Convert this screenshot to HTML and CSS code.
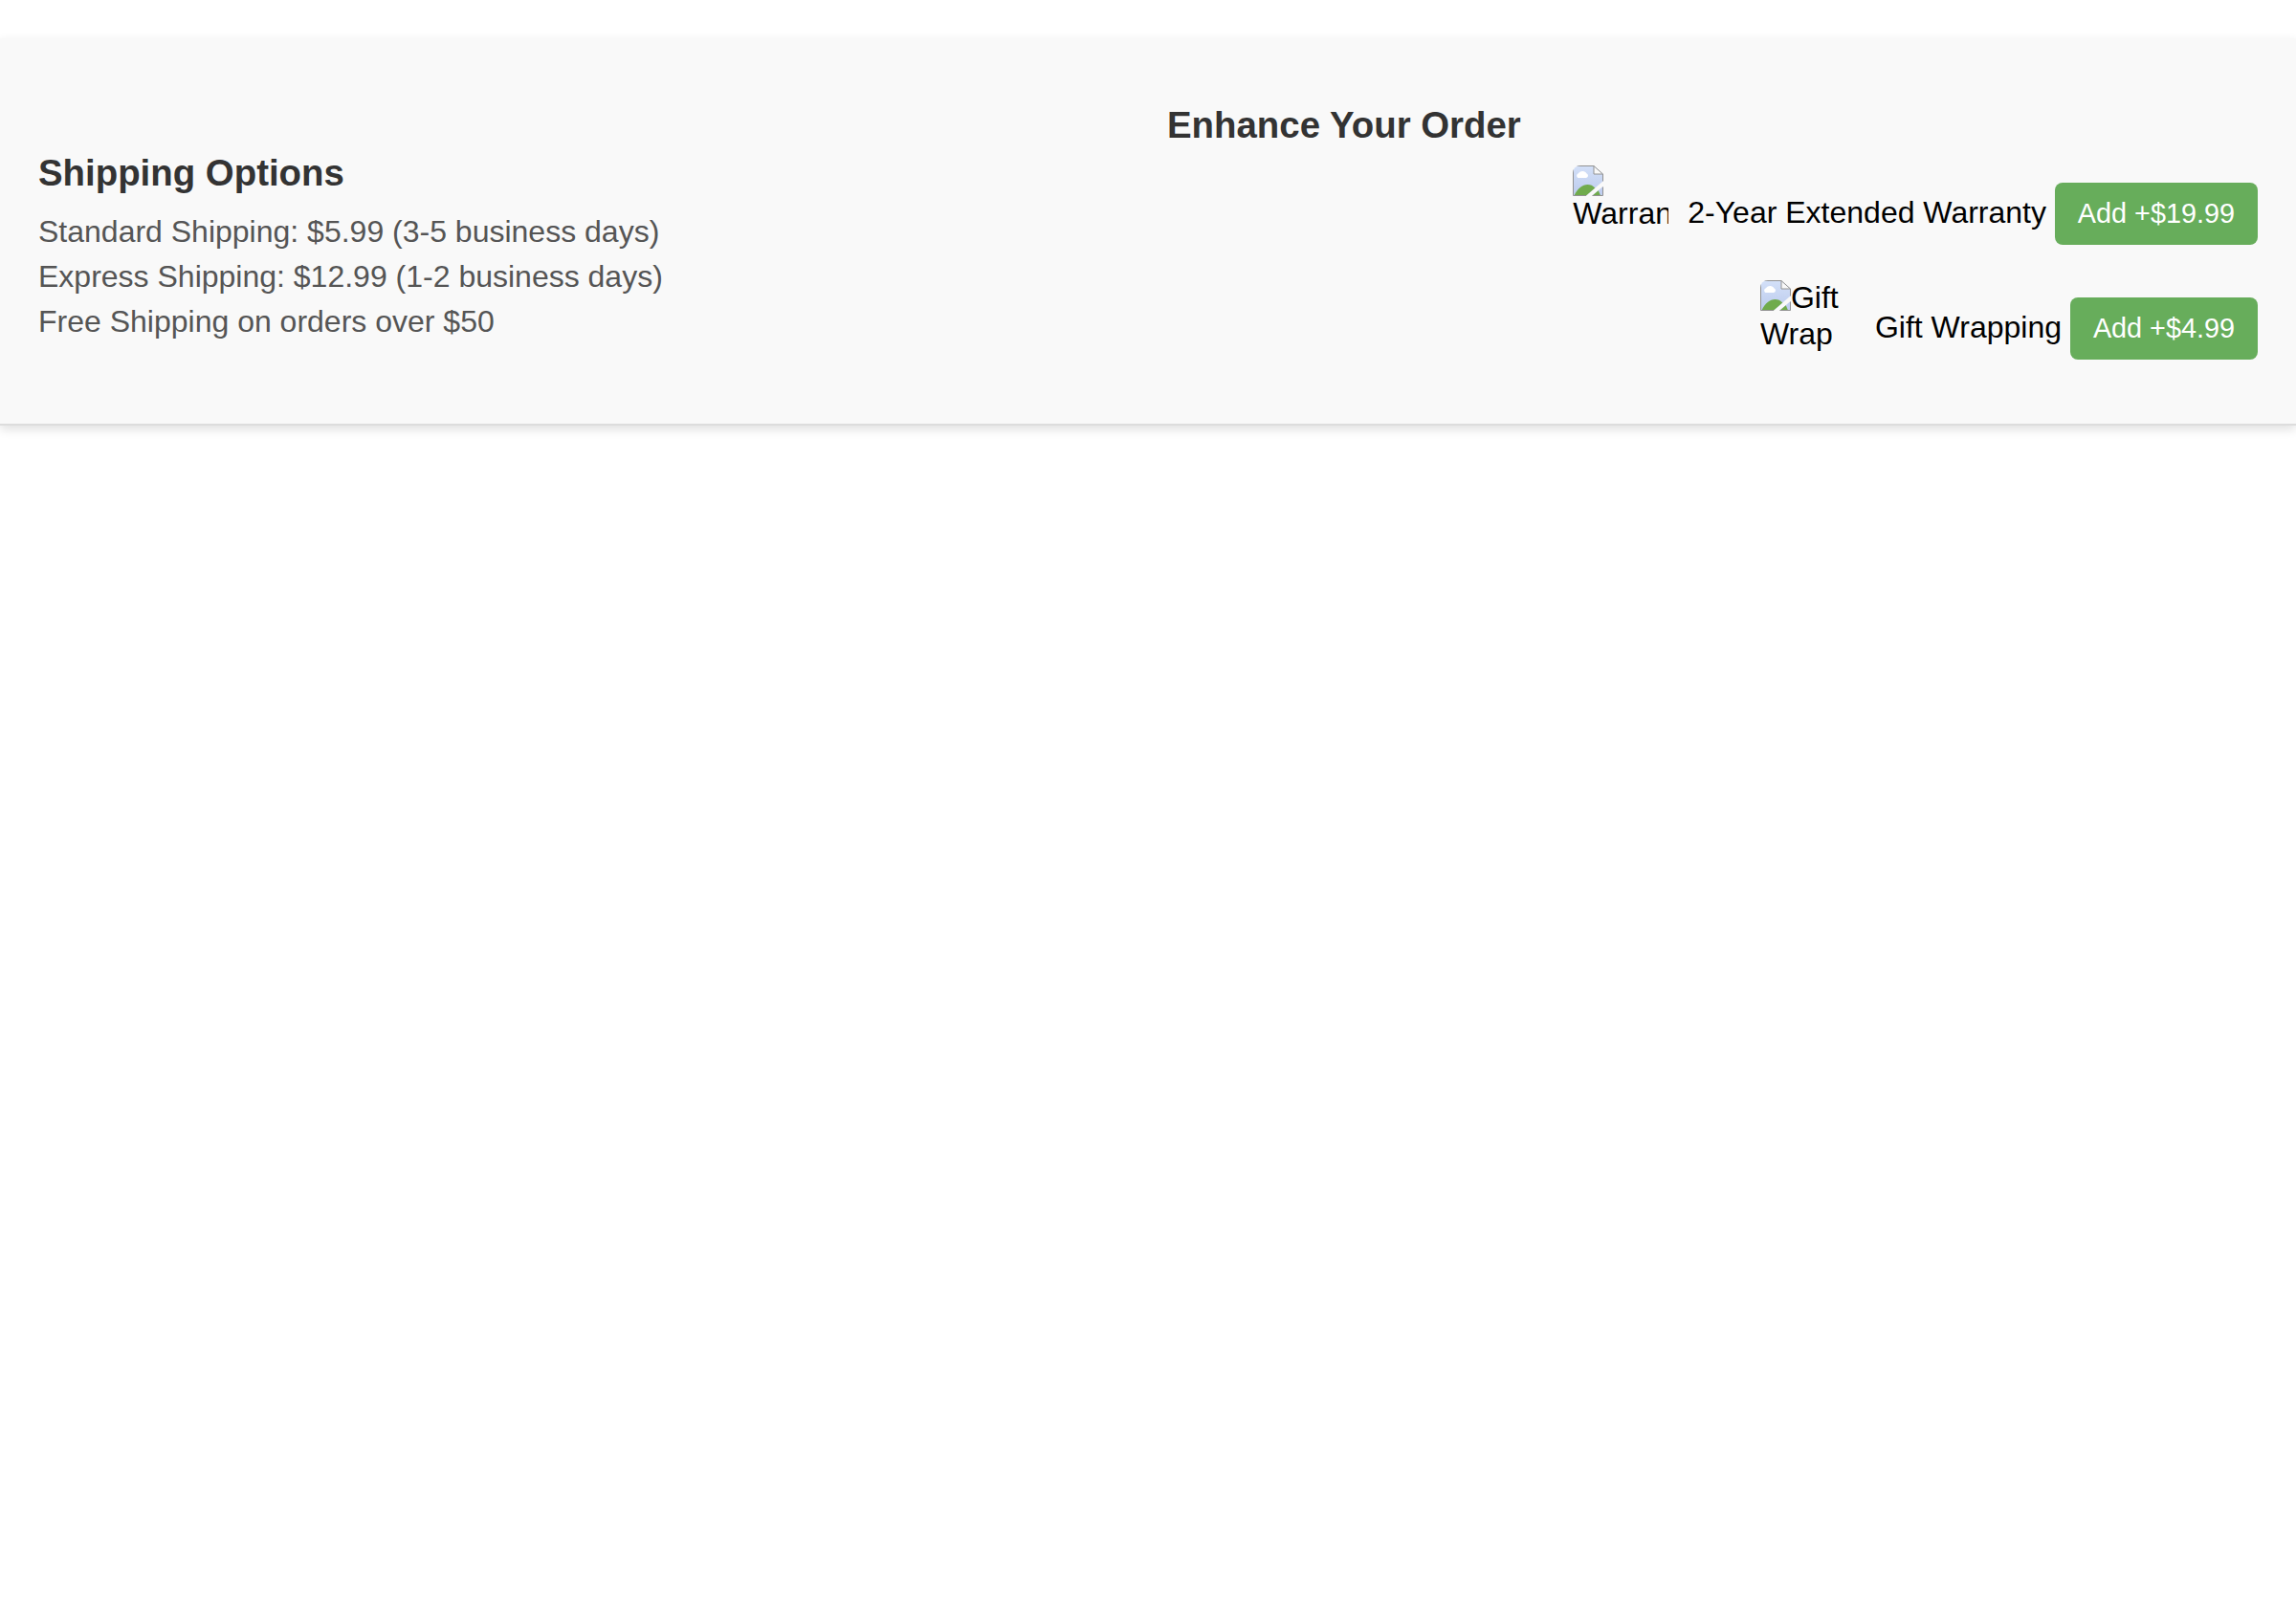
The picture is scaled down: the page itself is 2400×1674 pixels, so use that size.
FILE: index.html
```html
<!DOCTYPE html>
<html lang="en">
<head>
<meta charset="utf-8">
<title>Shipping Options</title>
<link rel="stylesheet" href="styles.css">
</head>
<body>
<svg class="defs" width="0" height="0" aria-hidden="true">
  <symbol id="broken" viewBox="0 0 32 32">
    <linearGradient id="sky" x1="0" y1="0" x2="0" y2="1"><stop offset="0" stop-color="#d3e0f8"/><stop offset="1" stop-color="#bccbed"/></linearGradient>
    <path d="M0.5 0.5H22L31.5 9V16.5L14 31.5H0.5Z" fill="url(#sky)"/>
    <path d="M31.5 22V31.5H20.5Z" fill="#c0cef0"/>
    <path d="M1.500 31.500C5 24 10 20 15.500 20C18.500 20 21 21 23.300 23.500L14 31.500Z" fill="#70ab4c"/>
    <path d="M20.500 31.500L26.800 26.200L29 31.500Z" fill="#70ab4c"/>
    <path d="M5.500 13A2.600 2.600 0 0 1 6 8.200A5 5 0 0 1 14.600 8.600A2.300 2.300 0 0 1 14 13Z" fill="#fff"/>
    <path d="M22 1V9H31Z" fill="#f9f9f9"/>
    <path d="M14 31.500H0.500V0.500H22L31.500 9V16.500M22 0.500V9H31.500M31.500 22.500V31.500H20.500" fill="none" stroke="#929292"/>
  </symbol>
</svg>
<section class="banner">
  <div class="column">
    <h3 class="title">Shipping Options</h3>
    <div class="rates">
      <p class="rate">Standard Shipping: $5.99 (3-5 business days)</p>
      <p class="rate">Express Shipping: $12.99 (1-2 business days)</p>
      <p class="rate">Free Shipping on orders over $50</p>
    </div>
  </div>
  <div class="column">
    <h3 class="title">Enhance Your Order</h3>
    <div class="addon">
      <div class="thumb"><svg class="thumb-icon"><use href="#broken"/></svg>Warranty</div>
      <div class="offer">2-Year Extended Warranty <button class="add">Add +$19.99</button></div>
    </div>
    <div class="addon">
      <div class="thumb"><svg class="thumb-icon"><use href="#broken"/></svg>Gift Wrap</div>
      <div class="offer">Gift Wrapping <button class="add">Add +$4.99</button></div>
    </div>
  </div>
</section>
</body>
</html>
```

FILE: styles.css
```css
body {
  box-sizing: border-box;
  min-height: 100vh;
  margin: 0;
  padding-top: 40px;
  background: #fff;
  font: 32px/37px "Liberation Sans", Arial, sans-serif;
  color: #000;
}
.defs {
  display: block;
}
.banner {
  display: flex;
  align-items: center;
  gap: 40px;
  box-sizing: border-box;
  height: 405px;
  padding: 69px 40px 30px;
  background: #f9f9f9;
  border-bottom: 2px solid #ddd;
  box-shadow: 0 4px 10px rgba(0, 0, 0, 0.12);
}
.column {
  flex: 1;
}
.title {
  margin: 0 0 20px;
  font-size: 38.4px;
  line-height: 44px;
  color: #333;
}
.rates {
  padding-top: 1px;
  margin-bottom: -1px;
}
.rate {
  margin: 0 0 10px;
  color: #555;
}
.addon {
  display: flex;
  align-items: center;
  justify-content: flex-end;
  gap: 20px;
  margin-bottom: 20px;
}
.thumb {
  width: 100px;
  height: 100px;
  overflow: hidden;
  border-radius: 8px;
  line-height: 37.5px;
}
.thumb-icon {
  float: left;
  width: 32px;
  height: 32px;
}
.offer {
  white-space: nowrap;
}
.add {
  padding: 16px 24px;
  border: 0;
  border-radius: 8px;
  background: #67ad5b;
  color: #fff;
  font: 28.8px/33px "Liberation Sans", Arial, sans-serif;
}
```
